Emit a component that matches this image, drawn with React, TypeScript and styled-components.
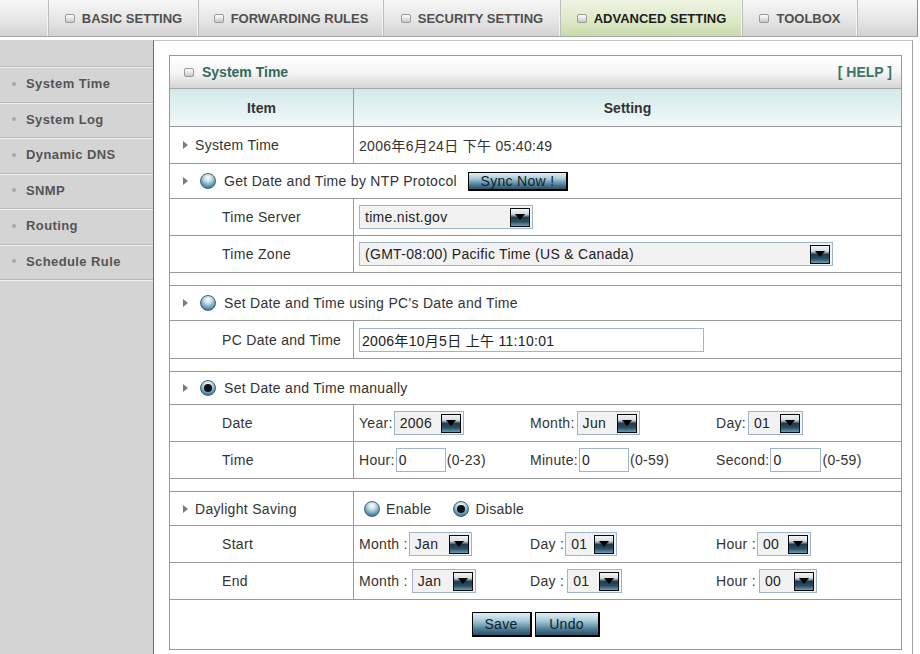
import React, { FC } from 'react'
import styled, { createGlobalStyle } from 'styled-components'

const GlobalStyle = createGlobalStyle`
  body {
    margin: 0;
    background: #ffffff;
    font-family: "Liberation Sans", Arial, "Noto Sans CJK SC", sans-serif;
  }
`

const tabs = [
  { label: '', w: 49 },
  { label: 'BASIC SETTING', w: 150 },
  { label: 'FORWARDING RULES', w: 185 },
  { label: 'SECURITY SETTING', w: 177 },
  { label: 'ADVANCED SETTING', w: 182, active: true },
  { label: 'TOOLBOX', w: 115 },
  { label: '', w: 60 },
]

const menu = ['System Time', 'System Log', 'Dynamic DNS', 'SNMP', 'Routing', 'Schedule Rule']

const Select: FC<{ w: number; value: string }> = ({ w, value }) => (
  <SelectBox $w={w}>
    <span>{value}</span>
    <DropBtn />
  </SelectBox>
)

const App: FC = () => {
  return (
    <>
      <GlobalStyle />
      <Page>
        <NavBar>
          {tabs.map((t, i) => (
            <NavTab key={i} $w={t.w} $active={!!t.active}>
              {t.label ? <><Box /> {t.label}</> : null}
            </NavTab>
          ))}
        </NavBar>
        <Body>
          <Sidebar>
            {menu.map(m => (
              <SideItem key={m}><Dot />{m}</SideItem>
            ))}
            <SideEnd />
          </Sidebar>
          <Main>
            <Panel>
              <PanelHead>
                <PanelTitle><Box /> System Time</PanelTitle>
                <Help>[ HELP ]</Help>
              </PanelHead>
              <HeadRow>
                <HeadCell>Item</HeadCell>
                <HeadCell $line>Setting</HeadCell>
              </HeadRow>

              <Row $h={37}>
                <ItemCell $section><Arrow />System Time</ItemCell>
                <SetCell>2006年6月24日 下午 05:40:49</SetCell>
              </Row>

              <SectionRow $h={35}>
                <Arrow $wide /><Radio /><span>Get Date and Time by NTP Protocol</span>
                <Btn $w={100} $h={19} style={{ marginLeft: 11 }}>Sync Now !</Btn>
              </SectionRow>
              <Row $h={37}>
                <ItemCell>Time Server</ItemCell>
                <SetCell><Select w={174} value="time.nist.gov" /></SetCell>
              </Row>
              <Row $h={37}>
                <ItemCell>Time Zone</ItemCell>
                <SetCell><Select w={474} value="(GMT-08:00) Pacific Time (US & Canada)" /></SetCell>
              </Row>
              <Spacer />

              <SectionRow $h={35}>
                <Arrow $wide /><Radio /><span>Set Date and Time using PC's Date and Time</span>
              </SectionRow>
              <Row $h={38}>
                <ItemCell>PC Date and Time</ItemCell>
                <SetCell><TextInput $w={345} defaultValue="2006年10月5日 上午 11:10:01" /></SetCell>
              </Row>
              <Spacer />

              <SectionRow $h={33}>
                <Arrow $wide /><Radio $checked /><span>Set Date and Time manually</span>
              </SectionRow>
              <Row $h={37}>
                <ItemCell>Date</ItemCell>
                <SetCell>
                  <Triple>
                    <Field>Year:<Select w={70} value="2006" /></Field>
                    <Field $gap={2}>Month:<Select w={63} value="Jun" /></Field>
                    <Field $gap={2}>Day:<Select w={55} value="01" /></Field>
                  </Triple>
                </SetCell>
              </Row>
              <Row $h={37}>
                <ItemCell>Time</ItemCell>
                <SetCell>
                  <Triple>
                    <Field>Hour:<TextInput $w={50} defaultValue="0" />(0-23)</Field>
                    <Field>Minute:<TextInput $w={50} defaultValue="0" />(0-59)</Field>
                    <Field>Second:<TextInput $w={51} defaultValue="0" />(0-59)</Field>
                  </Triple>
                </SetCell>
              </Row>
              <Spacer />

              <Row $h={34}>
                <ItemCell $section><Arrow />Daylight Saving</ItemCell>
                <SetCell>
                  <RadioLabel><Radio />Enable</RadioLabel>
                  <RadioLabel><Radio $checked />Disable</RadioLabel>
                </SetCell>
              </Row>
              <Row $h={37}>
                <ItemCell>Start</ItemCell>
                <SetCell>
                  <Triple>
                    <Field>Month :<Select w={63} value="Jan" /></Field>
                    <Field>Day :<Select w={52} value="01" /></Field>
                    <Field>Hour :<Select w={54} value="00" /></Field>
                  </Triple>
                </SetCell>
              </Row>
              <Row $h={37}>
                <ItemCell>End</ItemCell>
                <SetCell>
                  <Triple>
                    <Field $gap={4}>Month :<Select w={64} value="Jan" /></Field>
                    <Field $gap={3}>Day :<Select w={55} value="01" /></Field>
                    <Field $gap={3}>Hour :<Select w={58} value="00" /></Field>
                  </Triple>
                </SetCell>
              </Row>
              <ButtonRow>
                <Btn $w={60} $h={25}>Save</Btn>
                <Btn $w={65} $h={25}>Undo</Btn>
              </ButtonRow>
            </Panel>
          </Main>
        </Body>
      </Page>
    </>
  )
}

const Page = styled.div`
  width: 920px;
  height: 654px;
  display: flex;
  flex-direction: column;
  overflow: hidden;
  background: #ffffff;
  font-size: 14px;
  letter-spacing: 0.3px;
  color: #333333;
`

const NavBar = styled.div`
  display: flex;
  width: 918px;
  height: 37px;
  box-sizing: border-box;
  background: linear-gradient(#f7f7f7, #e4e4e4 60%, #d2d2d2);
  border-bottom: 1px solid #a8a8a8;
  border-right: 1px solid #8c8c8c;
`

const NavTab = styled.div<{ $w: number; $active: boolean }>`
  width: ${p => p.$w}px;
  flex: none;
  display: flex;
  align-items: center;
  justify-content: center;
  gap: 7px;
  box-sizing: border-box;
  border-right: 1px solid #bdbdbd;
  box-shadow: inset -1px 0 0 #f4f4f4;
  font-size: 13px;
  font-weight: bold;
  letter-spacing: 0;
  color: ${p => (p.$active ? '#1e1e1e' : '#505050')};
  background: ${p => (p.$active ? 'linear-gradient(#eef4e2, #dce9c6 60%, #c9dba9)' : 'transparent')};
  &:last-child {
    border-right: none;
    box-shadow: none;
  }
`

const Box = styled.span`
  display: inline-block;
  width: 8px;
  height: 7px;
  border: 1px solid #9a9a9a;
  border-radius: 2px;
  background: linear-gradient(#ffffff, #c8c8c8);
`

const Body = styled.div`
  flex: 1;
  display: flex;
  margin-top: 3px;
`

const Sidebar = styled.div`
  width: 153px;
  flex: none;
  background: #d4d4d4;
  padding-top: 26px;
  box-sizing: border-box;
`

const SideItem = styled.div`
  height: 35.5px;
  display: flex;
  align-items: center;
  padding-left: 12px;
  box-sizing: border-box;
  box-shadow: inset 0 1px 0 #b9b9b9, inset 0 2px 0 #f2f2f2;
  font-size: 13px;
  font-weight: bold;
  letter-spacing: 0.4px;
  color: #555555;
`

const SideEnd = styled.div`
  height: 2px;
  box-shadow: inset 0 1px 0 #b9b9b9, inset 0 2px 0 #f2f2f2;
`

const Dot = styled.span`
  width: 4px;
  height: 4px;
  border-radius: 50%;
  background: #a8a8a8;
  margin-right: 10px;
`

const Main = styled.div`
  width: 760px;
  flex: none;
  box-sizing: border-box;
  border-left: 1px solid #6e6e6e;
  border-right: 1px solid #a0a0a0;
  border-top: 1px solid #c4c4c4;
  padding: 14px 10px 0 15px;
`

const Panel = styled.div`
  border: 1px solid #999999;
`

const PanelHead = styled.div`
  height: 33px;
  box-sizing: border-box;
  display: flex;
  align-items: center;
  justify-content: space-between;
  padding: 0 9px 0 14px;
  background: linear-gradient(#ffffff, #f6f6f6 50%, #d6d6d6);
  border-bottom: 1px solid #a8a8a8;
`

const PanelTitle = styled.div`
  display: flex;
  align-items: center;
  gap: 8px;
  font-size: 14px;
  font-weight: bold;
  letter-spacing: 0;
  color: #2f6a5c;
`

const Help = styled.div`
  font-size: 14px;
  font-weight: bold;
  letter-spacing: 0;
  color: #3c7466;
`

const HeadRow = styled.div`
  display: grid;
  grid-template-columns: 183px 1fr;
  height: 37px;
  background: linear-gradient(#d3e9e9, #f1f9f9);
`

const HeadCell = styled.div<{ $line?: boolean }>`
  display: flex;
  align-items: center;
  justify-content: center;
  font-weight: bold;
  letter-spacing: 0;
  color: #333333;
  border-left: ${p => (p.$line ? '1px solid #999999' : 'none')};
`

const Row = styled.div<{ $h: number }>`
  display: grid;
  grid-template-columns: 183px 1fr;
  height: ${p => p.$h}px;
  box-sizing: border-box;
  border-top: 1px solid #999999;
`

const ItemCell = styled.div<{ $section?: boolean }>`
  display: flex;
  align-items: center;
  padding-left: ${p => (p.$section ? 13 : 52)}px;
`

const SetCell = styled.div`
  display: flex;
  align-items: center;
  padding-left: 5px;
  border-left: 1px solid #999999;
`

const SectionRow = styled.div<{ $h: number }>`
  display: flex;
  align-items: center;
  height: ${p => p.$h}px;
  box-sizing: border-box;
  border-top: 1px solid #999999;
  padding-left: 13px;
`

const Spacer = styled.div`
  height: 13px;
  box-sizing: border-box;
  border-top: 1px solid #999999;
`

const ButtonRow = styled.div`
  display: flex;
  justify-content: center;
  align-items: center;
  gap: 3px;
  height: 50px;
  box-sizing: border-box;
  border-top: 1px solid #999999;
`

const Arrow = styled.span<{ $wide?: boolean }>`
  width: 0;
  height: 0;
  border-left: 5px solid #7a7a7a;
  border-top: 4px solid transparent;
  border-bottom: 4px solid transparent;
  margin-right: ${p => (p.$wide ? 12 : 7)}px;
`

const Radio = styled.span<{ $checked?: boolean }>`
  position: relative;
  width: 16px;
  height: 16px;
  flex: none;
  box-sizing: border-box;
  border-radius: 50%;
  margin-right: 8px;
  border: 1px solid #3d6279;
  background: radial-gradient(circle at 50% 28%, #ffffff 0%, #c6dde9 30%, #5d93b2 68%, #234a63 100%);
  &::after {
    content: '';
    display: ${p => (p.$checked ? 'block' : 'none')};
    position: absolute;
    left: 3px;
    top: 3px;
    width: 8px;
    height: 8px;
    border-radius: 50%;
    background: #0b1217;
  }
`

const RadioLabel = styled.span`
  display: flex;
  align-items: center;
  margin-left: 5px;
  margin-right: 17px;
  & > span {
    margin-right: 6px;
  }
`

const Triple = styled.div`
  display: grid;
  grid-template-columns: 171px 186px 1fr;
  width: 100%;
  align-items: center;
`

const Field = styled.div<{ $gap?: number }>`
  display: flex;
  align-items: center;
  gap: ${p => (p.$gap === undefined ? 1 : p.$gap)}px;
  white-space: pre;
`

const SelectBox = styled.div<{ $w: number }>`
  display: inline-flex;
  align-items: center;
  justify-content: space-between;
  width: ${p => p.$w}px;
  height: 24px;
  box-sizing: border-box;
  padding: 0 2px 0 5px;
  border: 1px solid #9db4cc;
  background: #f2f2f2;
  color: #222222;
  white-space: pre;
`

const DropBtn = styled.span`
  position: relative;
  width: 20px;
  height: 19px;
  flex: none;
  box-sizing: border-box;
  border: 1px solid #0a0a0a;
  background: linear-gradient(#f3f5f7, #d5dde2 30%, #213b4b 50%, #2b4e62 75%, #6d9db3);
  &::after {
    content: '';
    position: absolute;
    left: 4px;
    top: 5px;
    width: 0;
    height: 0;
    border-top: 6px solid #000000;
    border-left: 5px solid transparent;
    border-right: 5px solid transparent;
  }
`

const TextInput = styled.input<{ $w: number }>`
  width: ${p => p.$w}px;
  height: 24px;
  box-sizing: border-box;
  border: 1px solid #9db4cc;
  background: #ffffff;
  padding: 0 2px;
  font-family: "Liberation Sans", Arial, "Noto Sans CJK SC", sans-serif;
  font-size: 14px;
  letter-spacing: 0.3px;
  color: #222222;
  outline: none;
`

const Btn = styled.button<{ $w: number; $h: number }>`
  width: ${p => p.$w}px;
  height: ${p => p.$h}px;
  padding: 0;
  box-sizing: border-box;
  border-style: solid;
  border-color: #000000;
  border-width: 1px 2px 2px 1px;
  background: linear-gradient(#e3eff4, #a9cbda 35%, #4b7a92 75%, #2c5166);
  font-family: "Liberation Sans", Arial, sans-serif;
  font-size: 14px;
  letter-spacing: 0.3px;
  color: #0f1f2a;
`

export default App
